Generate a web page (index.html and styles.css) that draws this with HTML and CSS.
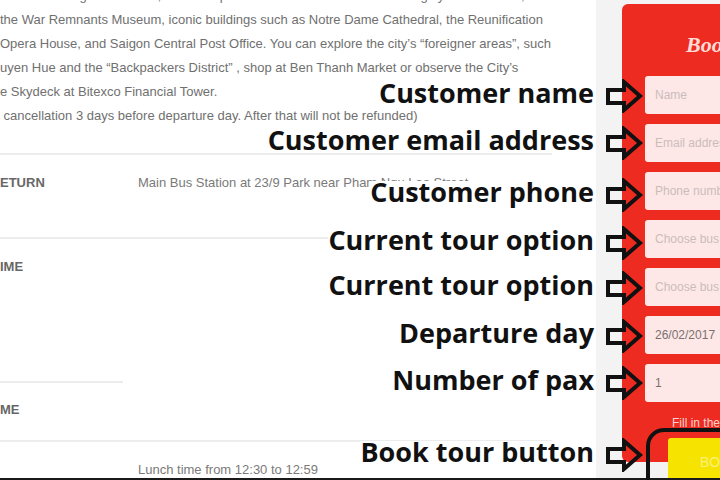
FILE: index.html
```html
<!DOCTYPE html>
<html lang="en">
<head>
    <meta charset="UTF-8">
    <meta name="viewport" content="width=device-width, initial-scale=1.0">
    <title>Saigon City Tour - Booking</title>
    <link rel="stylesheet" href="styles.css">
</head>
<body>

    <div class="page">
        <!-- Tour description and schedule -->
        <main class="tour-info">
            <p class="overview">
                nh at Pham Ngu Lao Street, with 3 stops in District 1 and District 3. It brings you to the Zoo, the<br>
                the War Remnants Museum, iconic buildings such as Notre Dame Cathedral, the Reunification<br>
                Opera House, and Saigon Central Post Office. You can explore the city’s “foreigner areas”, such<br>
                uyen Hue and the “Backpackers District” , shop at Ben Thanh Market or observe the City’s<br>
                e Skydeck at Bitexco Financial Tower.<br>
                &nbsp;cancellation 3 days before departure day. After that will not be refunded)
            </p>

            <div class="details">
                <div class="detail-row first">
                    <div class="detail-label">ETURN</div>
                    <div class="detail-value">Main Bus Station at 23/9 Park near Pham Ngu Lao Street</div>
                </div>
                <div class="detail-row second">
                    <div class="detail-label">
                        <div>IME</div>
                        <div class="sub-divider"></div>
                        <div class="sub-label">ME</div>
                    </div>
                    <div class="detail-value"></div>
                </div>
                <div class="detail-row">
                    <div class="detail-label"></div>
                    <div class="detail-value">Lunch time from 12:30 to 12:59</div>
                </div>
            </div>
        </main>

        <!-- Booking form -->
        <aside class="sidebar">
            <form class="booking">
                <h3 class="booking-title">Book Tour</h3>
                <input class="field" type="text" placeholder="Name">
                <input class="field" type="text" placeholder="Email address">
                <input class="field" type="text" placeholder="Phone number">
                <input class="field" type="text" placeholder="Choose bus option">
                <input class="field" type="text" placeholder="Choose bus time">
                <input class="field filled" type="text" value="26/02/2017">
                <input class="field filled" type="text" value="1">
                <p class="hint">Fill in the form to book your tour</p>
            </form>
            <button class="book-btn">BOOK TOUR</button>
        </aside>
    </div>

    <!-- Field notes -->
    <div class="callouts">
        <div class="callout c-name">
            <span class="note">Customer name</span>
            <svg class="arrow" viewBox="0 0 38 34"><path d="M18 11 H2 V24 H18 V31 L34 17 L18 3 Z"/></svg>
        </div>
        <div class="callout c-email">
            <span class="note">Customer email address</span>
            <svg class="arrow" viewBox="0 0 38 34"><path d="M18 11 H2 V24 H18 V31 L34 17 L18 3 Z"/></svg>
        </div>
        <div class="callout c-phone">
            <span class="note">Customer phone</span>
            <svg class="arrow" viewBox="0 0 38 34"><path d="M18 11 H2 V24 H18 V31 L34 17 L18 3 Z"/></svg>
        </div>
        <div class="callout c-option1">
            <span class="note">Current tour option</span>
            <svg class="arrow" viewBox="0 0 38 34"><path d="M18 11 H2 V24 H18 V31 L34 17 L18 3 Z"/></svg>
        </div>
        <div class="callout c-option2">
            <span class="note">Current tour option</span>
            <svg class="arrow" viewBox="0 0 38 34"><path d="M18 11 H2 V24 H18 V31 L34 17 L18 3 Z"/></svg>
        </div>
        <div class="callout c-date">
            <span class="note">Departure day</span>
            <svg class="arrow" viewBox="0 0 38 34"><path d="M18 11 H2 V24 H18 V31 L34 17 L18 3 Z"/></svg>
        </div>
        <div class="callout c-pax">
            <span class="note">Number of pax</span>
            <svg class="arrow" viewBox="0 0 38 34"><path d="M18 11 H2 V24 H18 V31 L34 17 L18 3 Z"/></svg>
        </div>
        <div class="callout c-button">
            <span class="note">Book tour button</span>
            <svg class="arrow" viewBox="0 0 38 34"><path d="M18 11 H2 V24 H18 V31 L34 17 L18 3 Z"/></svg>
        </div>
        <div class="button-ring"></div>
    </div>

</body>
</html>
```

FILE: styles.css
```css
body {
    margin: 0;
    font-family: "Liberation Sans", Arial, sans-serif;
    background-color: #fff;
    color: #707070;
}

.page {
    display: flex;
    width: 720px;
    height: 480px;
    box-sizing: border-box;
    border-bottom: 2px solid #1a1a1a;
    overflow: hidden;
}

/* Left column: tour text */
.tour-info {
    width: 596px;
    flex: none;
}

.overview {
    margin: -16px 0 0;
    font-size: 13px;
    line-height: 24px;
    white-space: nowrap;
}

.details {
    width: 552px;
    margin-top: 25px;
    font-size: 13px;
}

.detail-row {
    display: flex;
    border-top: 2px solid #ececec;
    padding-top: 19px;
    box-sizing: border-box;
    line-height: 18px;
}

.detail-row.first {
    height: 84px;
}

.detail-row.second {
    height: 203px;
}

.detail-label {
    width: 138px;
    flex: none;
    font-weight: bold;
    color: #676767;
}

.detail-value {
    color: #7a7a7a;
}

.sub-divider {
    width: 123px;
    height: 2px;
    background-color: #ececec;
    margin-top: 105px;
}

.sub-label {
    margin-top: 18px;
}

/* Right column: booking form */
.sidebar {
    width: 124px;
    flex: none;
    background-color: #f3f3f3;
    overflow: hidden;
}

.booking {
    width: 280px;
    margin: 4px 0 0 26px;
    padding: 26px 23px 31px;
    box-sizing: border-box;
    background-color: #ee2b20;
    border-radius: 6px;
}

.booking-title {
    margin: 0 0 16px 41px;
    font-family: "Liberation Serif", serif;
    font-style: italic;
    font-size: 22px;
    line-height: 30px;
    color: #fcdcd7;
}

.field {
    display: block;
    width: 100%;
    height: 38px;
    margin: 0 0 10px;
    padding: 0 10px;
    box-sizing: border-box;
    border: none;
    border-radius: 3px;
    background-color: #fde8e7;
    font-family: "Liberation Sans", Arial, sans-serif;
    font-size: 12px;
    color: #7a7070;
}

.field::placeholder {
    color: #cbbcbc;
}

.hint {
    margin: 13px 0 0 27px;
    font-size: 12px;
    line-height: 16px;
    color: #fbd2cd;
}

.book-btn {
    display: block;
    width: 200px;
    height: 60px;
    margin: -24px 0 0 72px;
    padding: 0 0 12px 32px;
    border: none;
    border-radius: 3px;
    background-color: #f6e400;
    color: #faf07c;
    font-family: "Liberation Sans", Arial, sans-serif;
    font-size: 14px;
    text-align: left;
}

/* Notes pointing at the form fields */
.callouts {
    position: absolute;
    top: 0;
    left: 0;
    width: 720px;
    height: 480px;
    overflow: hidden;
    pointer-events: none;
}

.callout {
    position: absolute;
    right: 76px;
    height: 40px;
    display: flex;
    align-items: center;
    gap: 12px;
}

.note {
    font-family: "Open Sans", sans-serif;
    font-weight: 700;
    font-size: 27px;
    line-height: 22px;
    height: 22px;
    color: #111;
    background-color: #fff;
    white-space: nowrap;
}

.arrow {
    width: 38px;
    height: 34px;
    margin-top: 6px;
    fill: none;
    stroke: #111;
    stroke-width: 4;
}

.c-name { top: 73px; }
.c-email { top: 120px; }
.c-phone { top: 172px; }
.c-option1 { top: 220px; }
.c-option2 { top: 265px; }
.c-date { top: 313px; }
.c-pax { top: 360px; }
.c-button { top: 432px; }

.button-ring {
    position: absolute;
    left: 646px;
    top: 428px;
    width: 120px;
    height: 80px;
    border: 4px solid #111;
    border-radius: 18px;
}
```
